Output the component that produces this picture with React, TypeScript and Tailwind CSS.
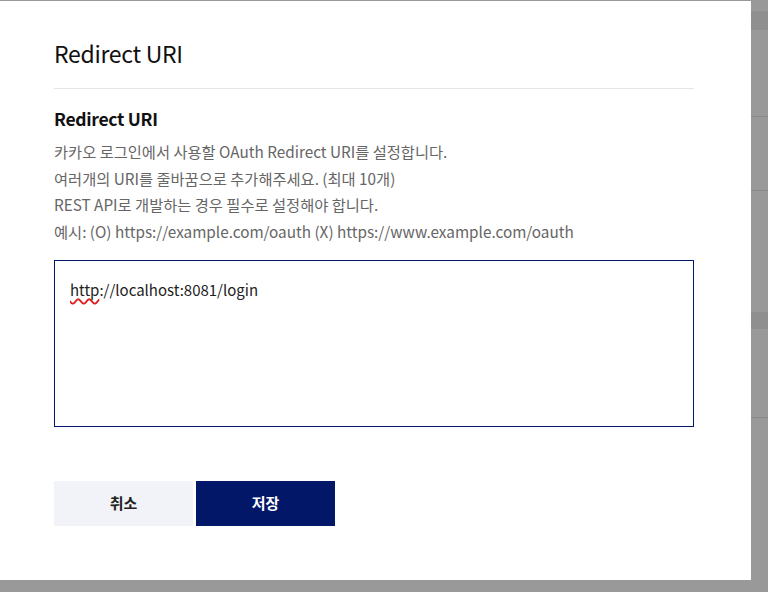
import React from "react";

export default function App() {
  const font = { fontFamily: '"Noto Sans CJK KR", "Noto Sans", sans-serif' };
  return (
    <div className="w-[768px] h-[592px] bg-[#999999] flex overflow-hidden" style={font}>
      <div className="w-[751px] h-[579px] mt-[1px] bg-white pl-[54px] pr-[57px] pt-[34px] flex flex-col">
        <div className="pb-[17px] border-b border-[#e5e5e5]">
          <h1 className="text-[23px] leading-[36px] text-[#111111] tracking-[-0.3px]">Redirect URI</h1>
        </div>
        <h2 className="mt-[16px] text-[17.5px] leading-[27px] font-bold text-[#111111] tracking-[-0.3px]">Redirect URI</h2>
        <div className="mt-[6px] text-[15.3px] leading-[26.7px] text-[#666666]">
          <p>카카오 로그인에서 사용할 OAuth Redirect URI를 설정합니다.</p>
          <p>여러개의 URI를 줄바꿈으로 추가해주세요. (최대 10개)</p>
          <p>REST API로 개발하는 경우 필수로 설정해야 합니다.</p>
          <p>예시: (O) https://example.com/oauth (X) https://www.example.com/oauth</p>
        </div>
        <div className="mt-[15px] h-[167px] border border-[#031769] px-[15px] pt-[17px] text-[15px] leading-[24px] text-[#222222]">
          <span className="underline decoration-wavy decoration-[#e02020] decoration-[1.5px] underline-offset-[2px] [text-decoration-skip-ink:none]">http</span>://localhost:8081/login
        </div>
        <div className="mt-[54px] flex gap-[3px]">
          <button className="w-[139px] h-[45px] bg-[#f2f3f8] text-[15px] font-bold text-[#222222]">취소</button>
          <button className="w-[139px] h-[45px] bg-[#031769] text-[15px] font-bold text-white">저장</button>
        </div>
      </div>
      <div className="flex-1 flex flex-col">
        <div className="h-[11px]" />
        <div className="h-[19px] bg-[#8f8f8f]" />
        <div className="h-[87px] border-b border-[#8a8a8a]" />
        <div className="h-[74px] border-b border-[#8a8a8a]" />
        <div className="h-[121px]" />
        <div className="h-[17px] bg-[#8f8f8f]" />
        <div className="h-[89px] border-b border-[#8a8a8a]" />
      </div>
    </div>
  );
}
